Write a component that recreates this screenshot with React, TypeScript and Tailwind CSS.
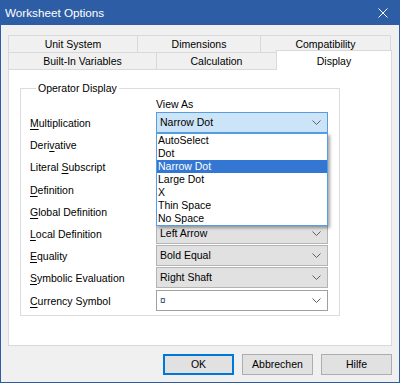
import React from "react";

interface Row {
  label: string;
  key: number;
  value: string;
  h: string;
  active?: boolean;
  white?: boolean;
}

// values of rows 2-5 sit under the open list, so they are left blank
const rows: Row[] = [
  { label: "Multiplication", key: 0, value: "Narrow Dot", h: "h-[22px]", active: true },
  { label: "Derivative", key: 4, value: "", h: "h-[22px]" },
  { label: "Literal Subscript", key: 8, value: "", h: "h-[23px]" },
  { label: "Definition", key: 0, value: "", h: "h-[22px]" },
  { label: "Global Definition", key: 0, value: "", h: "h-[22px]" },
  { label: "Local Definition", key: 0, value: "Left Arrow", h: "h-[22px]" },
  { label: "Equality", key: 0, value: "Bold Equal", h: "h-[22px]" },
  { label: "Symbolic Evaluation", key: 0, value: "Right Shaft", h: "h-[23px]" },
  { label: "Currency Symbol", key: 0, value: "¤", h: "h-[22px]", white: true },
];

const options = ["AutoSelect", "Dot", "Narrow Dot", "Large Dot", "X", "Thin Space", "No Space"];

const Chevron = () => (
  <svg width="9" height="5" viewBox="0 0 9 5" className="shrink-0">
    <polyline points="0.5,0.5 4.5,4.5 8.5,0.5" fill="none" stroke="#606060" strokeWidth="1" />
  </svg>
);

const Label: React.FC<{ text: string; at: number }> = ({ text, at }) => (
  <span>
    {text.slice(0, at)}
    <span className="underline underline-offset-2">{text.charAt(at)}</span>
    {text.slice(at + 1)}
  </span>
);

const Combo: React.FC<{ row: Row }> = ({ row }) => {
  const tone = row.active
    ? "bg-[#cce4f7] border-[#569de5]"
    : row.white
    ? "bg-white border-[#a0a0a0]"
    : "bg-[#e1e1e1] border-[#b4b4b4]";
  return (
    <div className="relative">
      <div className={`h-[21px] border ${tone} flex items-center justify-between pl-[3px] pr-[6px]`}>
        {row.white ? (
          <span className="text-[10px] text-[#1e3a66]">{row.value}</span>
        ) : (
          <span>{row.value}</span>
        )}
        <Chevron />
      </div>
      {row.active && (
        <div className="absolute left-0 top-full w-full z-20 bg-white border border-[#569de5] shadow-[2px_2px_3px_rgba(0,0,0,0.35)]">
          {options.map((o) => (
            <div
              key={o}
              className={`h-[13px] leading-[13px] pl-[1px] ${o === "Narrow Dot" ? "bg-[#3477d2] text-white" : ""}`}
            >
              {o}
            </div>
          ))}
        </div>
      )}
    </div>
  );
};

const Tab: React.FC<{ text: string; w: string; first?: boolean }> = ({ text, w, first }) => (
  <div
    className={`${w} h-[17px] border border-b-0 border-[#d9d9d9] bg-[#f0f0f0] flex items-center justify-center ${
      first ? "" : "-ml-px"
    }`}
  >
    {text}
  </div>
);

export default function App() {
  return (
    <div className="w-[400px] h-[383px] bg-[#f0f0f0] border-x border-b border-[#2d5da5] flex flex-col font-['Liberation_Sans',Arial,sans-serif] text-[10.5px] text-black leading-none">
      <div className="h-[25px] shrink-0 bg-[#2d5da5] flex items-center justify-between pl-[4px] pr-[11px]">
        <span className="text-white text-[11.7px]">Worksheet Options</span>
        <svg width="10" height="10" viewBox="0 0 10 10">
          <path d="M0.5 0.5 L9.5 9.5 M9.5 0.5 L0.5 9.5" stroke="#ffffff" strokeWidth="1" />
        </svg>
      </div>

      <div className="px-[7px] pt-[10px] flex flex-col">
        <div className="flex">
          <Tab text="Unit System" w="w-[130px]" first />
          <Tab text="Dimensions" w="w-[124px]" />
          <Tab text="Compatibility" w="w-[131px]" />
        </div>
        <div className="flex items-end h-[17px]">
          <Tab text="Built-In Variables" w="w-[149px]" first />
          <Tab text="Calculation" w="w-[121px]" />
          <div className="-ml-px w-[116px] h-[20px] -mb-px relative z-10 bg-white border border-b-0 border-[#d9d9d9] flex justify-center pt-[5px]">
            Display
          </div>
        </div>

        <div className="h-[277px] bg-white border border-[#d9d9d9] pl-[11px] pt-[11px]">
          <fieldset className="w-[320px] h-[235px] border border-[#dcdcdc] pl-[9px]">
            <legend className="ml-[6px] px-[2px] leading-[14px]">Operator Display</legend>
            <div className="grid grid-cols-[126px_172px] mt-[2px]">
              <div />
              <div className="h-[15px] leading-[14px]">View As</div>
              {rows.map((r) => (
                <React.Fragment key={r.label}>
                  <div className={`${r.h} flex items-start pt-[6px]`}>
                    <Label text={r.label} at={r.key} />
                  </div>
                  <div className={r.h}>
                    <Combo row={r} />
                  </div>
                </React.Fragment>
              ))}
            </div>
          </fieldset>
        </div>

        <div className="flex justify-end gap-[8px] mt-[8px]">
          <button className="w-[71px] h-[21px] bg-[#e1e1e1] border-2 border-[#0078d7]">OK</button>
          <button className="w-[71px] h-[21px] bg-[#e1e1e1] border border-[#adadad]">Abbrechen</button>
          <button className="w-[71px] h-[21px] bg-[#e1e1e1] border border-[#adadad]">Hilfe</button>
        </div>
      </div>
    </div>
  );
}
